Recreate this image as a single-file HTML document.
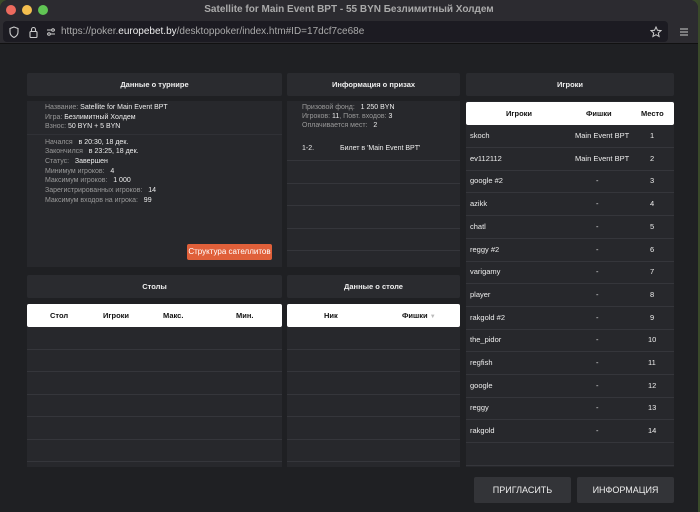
<!DOCTYPE html><html><head><meta charset="utf-8"><style>
*{box-sizing:border-box;margin:0;padding:0}
body{width:700px;height:512px;background:#3a4a2a;font-family:"Liberation Sans",sans-serif;overflow:hidden;position:relative}
.win{position:absolute;left:0;top:0;width:698px;height:512px;background:#1f2023;border-radius:8px 8px 0 0;overflow:hidden}
.title{height:20px;background:#2c2b30;color:#aaa;font-size:10px;font-weight:bold;text-align:center;line-height:20px;position:relative}
.dot{position:absolute;top:5px;width:10px;height:10px;border-radius:50%}
.urlrow{height:24px;background:#2c2b30;position:relative;border-bottom:1px solid #111}
.url{position:absolute;left:3px;right:30px;top:1px;height:21px;background:#1c1b22;border-radius:4px;color:#aaa;font-size:10px;line-height:21px;padding-left:58px}
.url b{color:#eee;font-weight:normal}
.abs{position:absolute}
.hdr{position:absolute;background:#2a2b2f;border-radius:2px;color:#eee;font-size:7.5px;font-weight:bold;text-align:center;line-height:23px}
.box{position:absolute;background:#27282c}
.th{position:absolute;background:#fff;border-radius:2px;color:#111;font-size:7.5px;font-weight:bold;height:23px;line-height:23px}
.row{position:absolute;left:0;right:0;height:1px;background:#35363b}
.t{color:#999;font-size:7px;position:absolute;white-space:nowrap}
.t b{color:#eee;font-weight:normal}
.pr{position:absolute;left:0;right:0;height:23px;border-bottom:1.5px solid #35363b;color:#eee;font-size:7.5px;line-height:22px}
.btn{position:absolute;top:477px;height:26px;width:97px;background:#333438;border-radius:2px;color:#eee;font-size:9px;text-align:center;line-height:26px}
</style></head><body><div class="win">
<div class="title"><span class="dot" style="left:6px;background:#ed6a5e"></span><span class="dot" style="left:22px;background:#f5bf4f"></span><span class="dot" style="left:38px;background:#61c554"></span>Satellite for Main Event BPT - 55 BYN Безлимитный Холдем</div>
<div class="urlrow"><div class="url">https://poker.<b>europebet.by</b>/desktoppoker/index.htm#ID=17dcf7ce68e
<svg class="abs" style="left:6px;top:5px" width="50" height="12" viewBox="0 0 50 12"><path d="M5 1 L9 2.5 V6 C9 9 7 10.5 5 11.5 C3 10.5 1 9 1 6 V2.5Z" fill="none" stroke="#ccc" stroke-width="1.1"/><rect x="21" y="5.5" width="7" height="6" rx="1" fill="none" stroke="#ccc" stroke-width="1.1"/><path d="M22.5 5.5V3.5a2 2 0 0 1 4 0V5.5" fill="none" stroke="#ccc" stroke-width="1.1"/><path d="M38 4h8M38 8h8" stroke="#ccc" stroke-width="1.1"/><circle cx="44" cy="4" r="1.3" fill="#1c1b22" stroke="#ccc"/><circle cx="40" cy="8" r="1.3" fill="#1c1b22" stroke="#ccc"/></svg>
<svg class="abs" style="right:6px;top:5px" width="12" height="12" viewBox="0 0 12 12"><path d="M6 1 L7.5 4.3 L11 4.6 L8.3 7 L9.1 10.5 L6 8.7 L2.9 10.5 L3.7 7 L1 4.6 L4.5 4.3Z" fill="none" stroke="#ccc" stroke-width="1"/></svg></div>
<svg class="abs" style="right:9px;top:7px" width="10" height="10"><path d="M1 2h8M1 5h8M1 8h8" stroke="#ccc" stroke-width="1.1"/></svg></div>

<div class="hdr" style="left:27px;top:73px;width:255px">Данные о турнире</div>
<div class="box" style="left:27px;top:101px;width:255px;height:166px">
<div class="t" style="left:18px;top:3px">Название: <b>Satellite for Main Event BPT</b></div>
<div class="t" style="left:18px;top:13px">Игра: <b>Безлимитный Холдем</b></div>
<div class="t" style="left:18px;top:22px">Взнос: <b>50 BYN + 5 BYN</b></div>
<div class="row" style="top:33px;background:#303136"></div>
<div class="t" style="left:18px;top:38px">Начался &nbsp;&nbsp;<b>в 20:30, 18 дек.</b></div>
<div class="t" style="left:18px;top:47px">Закончился &nbsp;&nbsp;<b>в 23:25, 18 дек.</b></div>
<div class="t" style="left:18px;top:57px">Статус: &nbsp;&nbsp;<b>Завершен</b></div>
<div class="t" style="left:18px;top:67px">Минимум игроков: &nbsp;&nbsp;<b>4</b></div>
<div class="t" style="left:18px;top:76px">Максимум игроков: &nbsp;&nbsp;<b>1 000</b></div>
<div class="t" style="left:18px;top:86px">Зарегистрированных игроков: &nbsp;&nbsp;<b>14</b></div>
<div class="t" style="left:18px;top:96px">Максимум входов на игрока: &nbsp;&nbsp;<b>99</b></div>
<div class="abs" style="left:160px;top:143px;width:85px;height:16px;background:#e0603a;border-radius:2px;color:#fff;font-size:8px;line-height:16px;text-align:center">Структура сателлитов</div>
</div>

<div class="hdr" style="left:287px;top:73px;width:173px">Информация о призах</div>
<div class="box" style="left:287px;top:101px;width:173px;height:166px">
<div class="t" style="left:15px;top:3px">Призовой фонд: &nbsp;&nbsp;<b>1 250 BYN</b></div>
<div class="t" style="left:15px;top:12px">Игроков: <b>11</b>, Повт. входов: <b>3</b></div>
<div class="t" style="left:15px;top:21px">Оплачивается мест: &nbsp;&nbsp;<b>2</b></div>
<div class="t" style="left:15px;top:44px"><b>1-2.</b></div>
<div class="t" style="left:53px;top:44px"><b>Билет в 'Main Event BPT'</b></div>
<div class="row" style="top:59px"></div><div class="row" style="top:82px"></div><div class="row" style="top:104px"></div><div class="row" style="top:127px"></div><div class="row" style="top:149px"></div>
</div>

<div class="hdr" style="left:466px;top:73px;width:208px">Игроки</div>
<div class="box" style="left:466px;top:101px;width:208px;height:366px">
<div class="th" style="left:0;top:1px;width:208px"><span class="abs" style="left:40px">Игроки</span><span class="abs" style="left:120px">Фишки</span><span class="abs" style="left:175px">Место</span></div>
<div class="abs" style="left:0;right:0;top:24px">
<div class="pr" style="top:0"><span class="abs" style="left:4px">skoch</span><span class="abs" style="left:109px">Main Event BPT</span><span class="abs" style="left:184px">1</span></div>
<div class="pr" style="top:22.7px"><span class="abs" style="left:4px">ev112112</span><span class="abs" style="left:109px">Main Event BPT</span><span class="abs" style="left:184px">2</span></div>
<div class="pr" style="top:45.4px"><span class="abs" style="left:4px">google #2</span><span class="abs" style="left:130px">-</span><span class="abs" style="left:184px">3</span></div>
<div class="pr" style="top:68.1px"><span class="abs" style="left:4px">azikk</span><span class="abs" style="left:130px">-</span><span class="abs" style="left:184px">4</span></div>
<div class="pr" style="top:90.8px"><span class="abs" style="left:4px">chatl</span><span class="abs" style="left:130px">-</span><span class="abs" style="left:184px">5</span></div>
<div class="pr" style="top:113.5px"><span class="abs" style="left:4px">reggy #2</span><span class="abs" style="left:130px">-</span><span class="abs" style="left:184px">6</span></div>
<div class="pr" style="top:136.2px"><span class="abs" style="left:4px">varigamy</span><span class="abs" style="left:130px">-</span><span class="abs" style="left:184px">7</span></div>
<div class="pr" style="top:158.9px"><span class="abs" style="left:4px">player</span><span class="abs" style="left:130px">-</span><span class="abs" style="left:184px">8</span></div>
<div class="pr" style="top:181.6px"><span class="abs" style="left:4px">rakgold #2</span><span class="abs" style="left:130px">-</span><span class="abs" style="left:184px">9</span></div>
<div class="pr" style="top:204.3px"><span class="abs" style="left:4px">the_pidor</span><span class="abs" style="left:130px">-</span><span class="abs" style="left:182px">10</span></div>
<div class="pr" style="top:227px"><span class="abs" style="left:4px">regfish</span><span class="abs" style="left:130px">-</span><span class="abs" style="left:182px">11</span></div>
<div class="pr" style="top:249.7px"><span class="abs" style="left:4px">google</span><span class="abs" style="left:130px">-</span><span class="abs" style="left:182px">12</span></div>
<div class="pr" style="top:272.4px"><span class="abs" style="left:4px">reggy</span><span class="abs" style="left:130px">-</span><span class="abs" style="left:182px">13</span></div>
<div class="pr" style="top:295.1px"><span class="abs" style="left:4px">rakgold</span><span class="abs" style="left:130px">-</span><span class="abs" style="left:182px">14</span></div>
<div class="pr" style="top:317.8px"></div>
</div></div>

<div class="hdr" style="left:27px;top:275px;width:255px">Столы</div>
<div class="box" style="left:27px;top:304px;width:255px;height:163px">
<div class="th" style="left:0;top:0;width:255px"><span class="abs" style="left:23px">Стол</span><span class="abs" style="left:76px">Игроки</span><span class="abs" style="left:136px">Макс.</span><span class="abs" style="left:209px">Мин.</span></div>
<div class="row" style="top:45px"></div><div class="row" style="top:67px"></div><div class="row" style="top:90px"></div><div class="row" style="top:112px"></div><div class="row" style="top:135px"></div><div class="row" style="top:157px"></div>
</div>
<div class="hdr" style="left:287px;top:275px;width:173px">Данные о столе</div>
<div class="box" style="left:287px;top:304px;width:173px;height:163px">
<div class="th" style="left:0;top:0;width:173px"><span class="abs" style="left:37px">Ник</span><span class="abs" style="left:115px">Фишки <span style="color:#bbb;font-size:6px">▼</span></span></div>
<div class="row" style="top:45px"></div><div class="row" style="top:67px"></div><div class="row" style="top:90px"></div><div class="row" style="top:112px"></div><div class="row" style="top:135px"></div><div class="row" style="top:157px"></div>
</div>
<div class="btn" style="left:474px">ПРИГЛАСИТЬ</div>
<div class="btn" style="left:577px">ИНФОРМАЦИЯ</div>
</div></body></html>
